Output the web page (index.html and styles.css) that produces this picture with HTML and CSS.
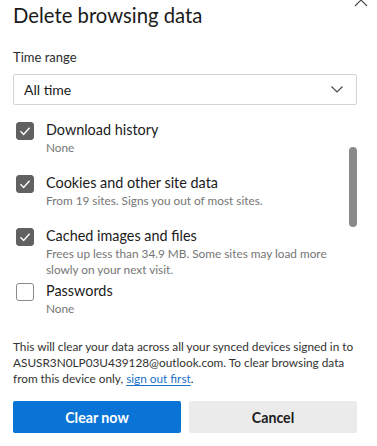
FILE: index.html
```html
<!DOCTYPE html>
<html lang="en">
<head>
<meta charset="utf-8">
<title>Delete browsing data</title>
<link rel="stylesheet" href="styles.css">
</head>
<body>
<div class="dialog">
  <button class="close" aria-label="Close">
    <svg width="14" height="14" viewBox="0 0 14 14"><path d="M1 1 L13 13 M13 1 L1 13" stroke="#444" stroke-width="1.1" fill="none"/></svg>
  </button>
  <h1 class="title">Delete browsing data</h1>
  <div class="field-label">Time range</div>
  <div class="select">
    <span class="select-value">All time</span>
    <svg class="chevron" width="12" height="7" viewBox="0 0 12 7"><path d="M0.5 0.5 L6 6 L11.5 0.5" stroke="#444" stroke-width="1.1" fill="none"/></svg>
  </div>
  <div class="list">
    <div class="item">
      <span class="box checked"><svg width="18" height="18" viewBox="0 0 18 18"><path d="M4.5 9.3 L7.6 12.4 L13.6 5.8" stroke="#fff" stroke-width="1.4" fill="none"/></svg></span>
      <div class="item-text">
        <div class="item-label">Download history</div>
        <div class="item-sub">None</div>
      </div>
    </div>
    <div class="item">
      <span class="box checked"><svg width="18" height="18" viewBox="0 0 18 18"><path d="M4.5 9.3 L7.6 12.4 L13.6 5.8" stroke="#fff" stroke-width="1.4" fill="none"/></svg></span>
      <div class="item-text">
        <div class="item-label">Cookies and other site data</div>
        <div class="item-sub">From 19 sites. Signs you out of most sites.</div>
      </div>
    </div>
    <div class="item item-tight">
      <span class="box checked"><svg width="18" height="18" viewBox="0 0 18 18"><path d="M4.5 9.3 L7.6 12.4 L13.6 5.8" stroke="#fff" stroke-width="1.4" fill="none"/></svg></span>
      <div class="item-text">
        <div class="item-label">Cached images and files</div>
        <div class="item-sub">Frees up less than 34.9 MB. Some sites may load more<br>slowly on your next visit.</div>
      </div>
    </div>
    <div class="item">
      <span class="box"></span>
      <div class="item-text">
        <div class="item-label">Passwords</div>
        <div class="item-sub">None</div>
      </div>
    </div>
    <div class="scrollbar"></div>
  </div>
  <p class="note">This will clear your data across all your synced devices signed in to<br>ASUSR3N0LP03U439128@outlook.com. To clear browsing data<br>from this device only, <a href="#">sign out first</a>.</p>
  <div class="actions">
    <button class="btn primary">Clear now</button>
    <button class="btn secondary">Cancel</button>
  </div>
</div>
</body>
</html>
```

FILE: styles.css
```css
html, body {
  margin: 0;
  padding: 0;
  background: #fff;
}
body {
  font-family: "Lato", "Open Sans", sans-serif;
  color: #1b1b1b;
  overflow: hidden;
}
.dialog {
  position: relative;
  padding: 0 20px 0 13px;
}
.close {
  position: absolute;
  top: -8px;
  right: 9px;
  border: 0;
  background: none;
  padding: 0;
  width: 14px;
  height: 14px;
}
.close svg { display: block; }
.title {
  margin: 1px 0 0;
  font-size: 20.3px;
  line-height: 28px;
  font-weight: 400;
  color: #1a1a1a;
}
.field-label {
  margin-top: 19px;
  font-size: 13px;
  line-height: 18px;
  color: #2b2b2b;
}
.select {
  margin-top: 8px;
  height: 31px;
  box-sizing: border-box;
  border: 1px solid #d4d4d4;
  border-radius: 2px;
  display: flex;
  align-items: center;
  justify-content: space-between;
  padding: 0 13px 0 10px;
}
.select-value {
  font-size: 14px;
  color: #1b1b1b;
}
.chevron { display: block; }
.list {
  position: relative;
  margin-top: 15px;
}
.item {
  display: flex;
  gap: 12px;
  padding-left: 3px;
  margin-bottom: 17px;
}
.item-tight { margin-bottom: 3px; }
.item:last-of-type { margin-bottom: 0; }
.box {
  flex: none;
  width: 18px;
  height: 18px;
  box-sizing: border-box;
  border: 1px solid #8a8a8a;
  border-radius: 3px;
  margin-top: 2px;
  background: #fff;
}
.box.checked {
  background: #616161;
  border-color: #616161;
}
.box svg { display: block; margin: -1px; }
.item-label {
  font-size: 14.4px;
  line-height: 20px;
  color: #1b1b1b;
}
.item-sub {
  font-size: 11.8px;
  line-height: 16px;
  color: #767676;
}
.scrollbar {
  position: absolute;
  right: 0;
  top: 27px;
  width: 8px;
  height: 80px;
  border-radius: 4px;
  background: #8a8a8a;
}
.note {
  margin: 22px 0 0;
  font-size: 11.8px;
  line-height: 16px;
  color: #333;
}
.note a {
  color: #1a73c9;
  text-decoration: underline;
  text-underline-offset: 2px;
}
.actions {
  margin-top: 14px;
  display: grid;
  grid-template-columns: 1fr 1fr;
  gap: 8px;
}
.btn {
  height: 32px;
  border: 0;
  border-radius: 2px;
  font-family: "Lato", "Open Sans", sans-serif;
  font-size: 14.2px;
  font-weight: 700;
}
.primary {
  background: #0a74d6;
  color: #fff;
}
.secondary {
  background: #ebebeb;
  color: #1b1b1b;
}
```
